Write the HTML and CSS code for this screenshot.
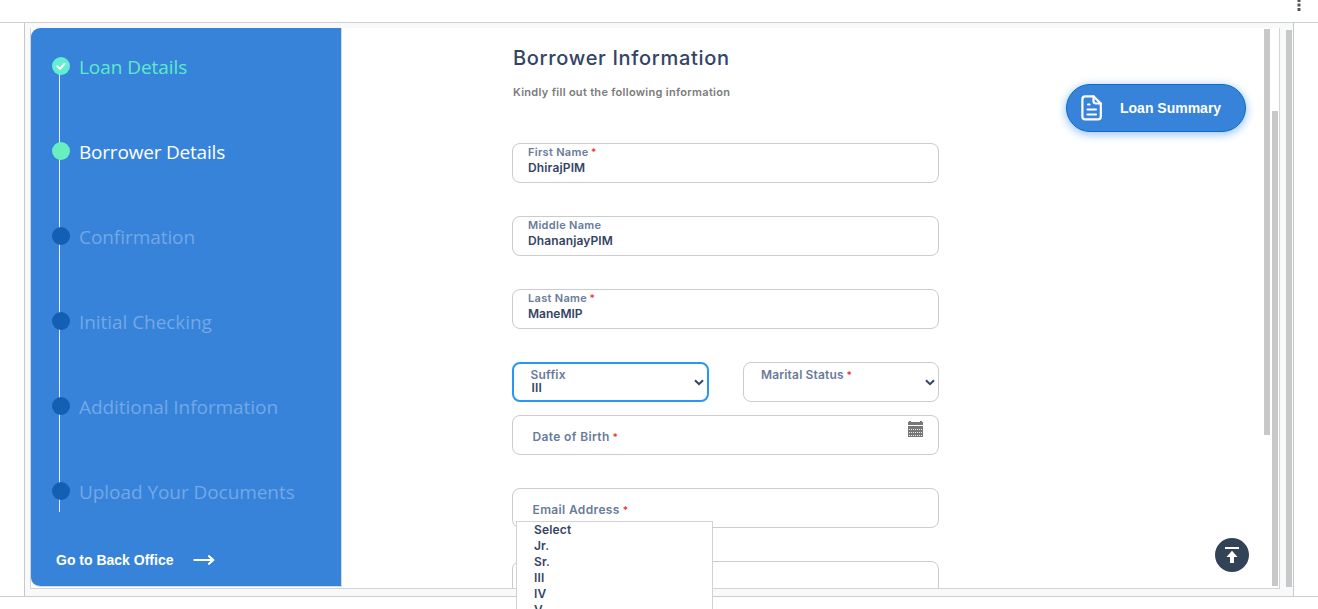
FILE: index.html
```html
<!DOCTYPE html>
<html lang="en">
<head>
<meta charset="utf-8">
<title>Borrower Information</title>
<link rel="stylesheet" href="styles.css">
</head>
<body>
<header class="topbar">
  <svg class="kebab" width="6" height="14" viewBox="0 0 6 14" fill="#555"><rect x="1.500" y="-1" width="3" height="3" rx=".6"/><rect x="1.500" y="3.500" width="3" height="3" rx=".6"/><rect x="1.500" y="8" width="3" height="3" rx=".6"/></svg>
</header>
<div class="frame">
  <div class="inner">
    <aside class="sidebar">
      <ol class="steps">
        <li class="step done"><span class="dot"><svg width="18" height="18" viewBox="0 0 18 18" fill="none" stroke="#fff" stroke-width="2" stroke-linecap="round" stroke-linejoin="round"><path d="M5.300 9.200l2.600 2.500 4.800-5"/></svg></span>Loan Details</li>
        <li class="step current"><span class="dot"></span>Borrower Details</li>
        <li class="step"><span class="dot"></span>Confirmation</li>
        <li class="step"><span class="dot"></span>Initial Checking</li>
        <li class="step"><span class="dot"></span>Additional Information</li>
        <li class="step"><span class="dot"></span>Upload Your Documents</li>
      </ol>
      <a class="back">Go to Back Office
        <svg width="22" height="12" viewBox="0 0 22 12" fill="none" stroke="#fff" stroke-width="2.200" stroke-linecap="round" stroke-linejoin="round"><path d="M1.400 6h18.600M16 2.200L20.300 6 16 9.800"/></svg>
      </a>
    </aside>
    <main class="main">
      <h1 class="title">Borrower Information</h1>
      <p class="hint">Kindly fill out the following information</p>
      <form class="form">
        <div class="field filled"><label>First Name <b>*</b></label><span class="value v-first">DhirajPIM</span></div>
        <div class="field filled"><label>Middle Name</label><span class="value">DhananjayPIM</span></div>
        <div class="field filled"><label>Last Name <b>*</b></label><span class="value v-last">ManeMIP</span></div>
        <div class="row">
          <div class="field select focused">
            <div class="select-text"><label>Suffix</label><span class="value">III</span></div>
            <svg width="10" height="7" viewBox="0 0 10 7" fill="none" stroke="#344464" stroke-width="2"><path d="M1 1.200l4 4 4-4"/></svg>
          </div>
          <div class="field select">
            <div class="select-text"><label class="marital">Marital Status <b>*</b></label></div>
            <svg width="10" height="7" viewBox="0 0 10 7" fill="none" stroke="#344464" stroke-width="2"><path d="M1 1.200l4 4 4-4"/></svg>
          </div>
        </div>
        <div class="field empty"><label>Date of Birth <b>*</b></label>
          <svg class="calendar" width="15" height="16" viewBox="0 0 15 16" shape-rendering="crispEdges"><path fill="#777" d="M0 4V1h1V0h2v1h9V0h2v1h1v3zM0 5h15v11H0z"/><path stroke="#eee" stroke-width="1" stroke-dasharray="1 1" d="M1 8.500h13M1 11.500h13M1 14.500h13"/></svg>
        </div>
        <div class="field empty"><label>Email Address <b>*</b></label></div>
        <div class="field empty"></div>
      </form>
    </main>
    <span class="bar bar-content"></span>
    <span class="bar bar-page"></span>
    <button class="summary" type="button">
      <svg width="22" height="26" viewBox="0 0 22 26" fill="none" stroke="#fff" stroke-width="2.200" stroke-linejoin="round" stroke-linecap="round"><path d="M12.500 1.400H4.200Q1.400 1.400 1.400 4.200v17.400q0 2.800 2.800 2.800h12.800q2.800 0 2.800-2.800V8.500z"/><path d="M12.500 1.400V6q0 2.500 2.500 2.500h4.800"/><path d="M7 9.500h1.500M6.500 14.500h8.500M6.500 19.500h8.500"/></svg>
      Loan Summary
    </button>
    <button class="to-top" type="button" aria-label="Back to top">
      <svg width="16" height="18" viewBox="0 0 16 18" fill="#fff"><path d="M1 1h14v2H1zM8 4.800l5.500 6.200H10v6H6v-6H2.500z"/></svg>
    </button>
  </div>
  <span class="bar-frame"></span>
</div>
<ul class="options"><li>Select</li><li>Jr.</li><li>Sr.</li><li>III</li><li>IV</li><li>V</li></ul>
</body>
</html>
```
FILE: styles.css
```css
* { box-sizing: border-box; }
body { margin: 0; height: 609px; overflow: hidden; position: relative; background: #fff; font-family: Inter, "Open Sans", sans-serif; color: #344464; }
.topbar { height: 23px; border-bottom: 1px solid #d0d0d0; display: flex; justify-content: flex-end; padding-right: 16px; }
.kebab { display: block; }
.frame { height: 573px; margin: 0 24px; border: 1px solid #c8c8c8; border-width: 0 1px; background: #f8f9fb; padding: 5px 0 0 5px; display: flex; position: relative; }
.frame::after { content: ""; position: absolute; left: -25px; right: -25px; top: 573px; height: 1px; background: #ccc; }
.inner { position: relative; width: 1250px; height: 561px; flex: none; background: #fff; border: 1px solid #d3d5d4; border-top: 0; display: flex; overflow: hidden; }
.bar-frame { width: 6px; height: 557px; margin: 2px 0 0 6px; background: #c8c8c8; }
.bar { position: absolute; width: 6px; background: #c8c8c8; }
.bar-content { left: 1233px; top: 1px; height: 406px; }
.bar-page { left: 1241px; top: 83px; height: 475px; }

.sidebar { width: 311px; height: 559px; flex: none; background: #3783da; background-clip: padding-box; border: 1px solid #d7dadb; border-width: 0 1px 1px 0; border-radius: 9px 0 0 9px; }
.steps { list-style: none; margin: 0; padding: 29px 0 0 21px; height: 484px; position: relative; font: 400 19px/18px "Open Sans", "Noto Sans", sans-serif; letter-spacing: -.06px; color: #73a8e5; }
.steps::before { content: ""; position: absolute; left: 28px; top: 40px; bottom: 0; width: 1px; background: #e4effb; }
.step { display: flex; height: 85px; gap: 9px; line-height: 20px; position: relative; }
.dot { width: 18px; height: 18px; border-radius: 50%; background: #125fb4; flex: none; }
.dot svg { display: block; }
.done { color: #5eeac6; }
.done .dot { background: #64eed1; }
.current { color: #fff; letter-spacing: -.2px; }
.current .dot { background: #67efbd; }
.back { display: flex; align-items: center; gap: 20px; height: 20px; margin: 38px 0 0 25px; font: 700 14px/20px "Liberation Sans", Arial, sans-serif; color: #fff; }

.main { padding: 19px 0 0 170px; width: 597px; }
.title { margin: 0 0 0 1px; font-size: 20px; line-height: 22px; font-weight: 500; letter-spacing: .68px; white-space: nowrap; }
.hint { margin: 16px 0 0 1px; font-size: 11px; line-height: 14px; font-weight: 600; letter-spacing: .3px; color: #7b7b7b; white-space: nowrap; }
.form { margin-top: 44px; display: grid; gap: 33px; }
.field { height: 40px; border: 1px solid #cbcbcb; border-radius: 8px; font-size: 12px; font-weight: 600; letter-spacing: .36px; line-height: 14px; }
.field label { display: block; color: #687b99; white-space: nowrap; }
.field label b { color: #f0392f; font-weight: 600; font-size: 10px; line-height: 1; margin-left: -.5px; }
.filled { padding: 1px 15px; }
.filled label { font-size: 11px; letter-spacing: .3px; margin-bottom: 1px; }
.value { display: block; letter-spacing: .12px; line-height: 16px; }
.v-first { letter-spacing: .15px; }
.v-last { letter-spacing: 0; }
.row { display: flex; justify-content: space-between; margin-bottom: -20px; }
.select { width: 196px; display: flex; justify-content: space-between; padding: 5px 3px 0 17px; letter-spacing: .2px; }
.select svg { margin-top: 11px; }
.select .value { line-height: 12px; padding-left: 1px; }
.marital { letter-spacing: .16px; }
.focused { width: 197px; border: 2px solid #2698ef; padding: 4px 3px 0 16.5px; }
.empty { display: flex; justify-content: space-between; padding: 14px 15px 0 19.5px; }
.calendar { margin-top: -9px; }

.summary { position: absolute; left: 1035px; top: 56px; width: 180px; height: 48px; border: 1px solid #0c6dca; border-radius: 24px; background: #3783da; box-shadow: 0 2px 8px 1px #9fc8fa; display: flex; align-items: center; gap: 17px; padding: 0 0 0 14px; color: #fff; font: 700 14px "Liberation Sans", Arial, sans-serif; }
.to-top { position: absolute; left: 1184px; top: 510px; width: 34px; height: 34px; border: 0; border-radius: 50%; background: #334357; display: grid; place-items: center; padding: 0; }
.options { position: absolute; left: 516px; top: 521px; width: 197px; height: 100px; margin: 0; padding: 0 0 0 17px; list-style: none; background: #fff; border: 1px solid #d0d2d3; font-size: 12px; line-height: 16px; font-weight: 600; letter-spacing: .15px; }
```
